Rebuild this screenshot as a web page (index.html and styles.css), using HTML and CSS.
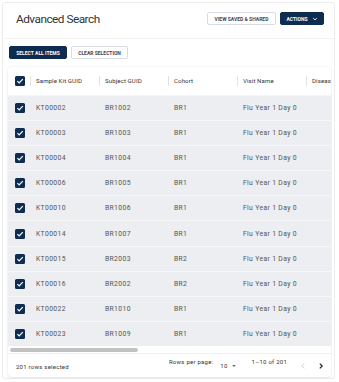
FILE: index.html
```html
<!DOCTYPE html>
<html>
<head>
<meta charset="utf-8">
<link rel="stylesheet" href="styles.css">
</head>
<body>
<div class="page">
  <div class="header">
    <h1 class="title">Advanced Search</h1>
    <div class="header-actions">
      <button class="btn btn-outline">VIEW SAVED &amp; SHARED</button>
      <button class="btn btn-dark">ACTIONS
        <svg class="chev" viewBox="0 0 10 10" width="6" height="6"><path d="M2 3.5 L5 6.5 L8 3.5" fill="none" stroke="#fff" stroke-width="1.6"/></svg>
      </button>
    </div>
  </div>
  <div class="toolbar">
    <button class="btn btn-dark">SELECT ALL ITEMS</button>
    <button class="btn btn-outline">CLEAR SELECTION</button>
  </div>
  <div class="card">
    <div class="table">
      <div class="row head">
        <div class="cell cb"><span class="check"><svg viewBox="0 0 10 10" width="10" height="10"><path d="M2.4 5.2 L4.2 7 L7.8 3.2" fill="none" stroke="#fff" stroke-width="1.2"/></svg></span><i class="sep"></i></div>
        <div class="cell">Sample Kit GUID<i class="sep"></i></div>
        <div class="cell">Subject GUID<i class="sep"></i></div>
        <div class="cell">Cohort<i class="sep"></i></div>
        <div class="cell">Visit Name<i class="sep"></i></div>
        <div class="cell">Disease</div>
      </div>
      <div class="row"><div class="cell cb"><span class="check"><svg viewBox="0 0 10 10" width="10" height="10"><path d="M2.4 5.2 L4.2 7 L7.8 3.2" fill="none" stroke="#fff" stroke-width="1.2"/></svg></span></div><div class="cell">KT00002</div><div class="cell">BR1002</div><div class="cell">BR1</div><div class="cell">Flu Year 1 Day 0</div><div class="cell"></div></div>
      <div class="row"><div class="cell cb"><span class="check"><svg viewBox="0 0 10 10" width="10" height="10"><path d="M2.4 5.2 L4.2 7 L7.8 3.2" fill="none" stroke="#fff" stroke-width="1.2"/></svg></span></div><div class="cell">KT00003</div><div class="cell">BR1003</div><div class="cell">BR1</div><div class="cell">Flu Year 1 Day 0</div><div class="cell"></div></div>
      <div class="row"><div class="cell cb"><span class="check"><svg viewBox="0 0 10 10" width="10" height="10"><path d="M2.4 5.2 L4.2 7 L7.8 3.2" fill="none" stroke="#fff" stroke-width="1.2"/></svg></span></div><div class="cell">KT00004</div><div class="cell">BR1004</div><div class="cell">BR1</div><div class="cell">Flu Year 1 Day 0</div><div class="cell"></div></div>
      <div class="row"><div class="cell cb"><span class="check"><svg viewBox="0 0 10 10" width="10" height="10"><path d="M2.4 5.2 L4.2 7 L7.8 3.2" fill="none" stroke="#fff" stroke-width="1.2"/></svg></span></div><div class="cell">KT00006</div><div class="cell">BR1005</div><div class="cell">BR1</div><div class="cell">Flu Year 1 Day 0</div><div class="cell"></div></div>
      <div class="row"><div class="cell cb"><span class="check"><svg viewBox="0 0 10 10" width="10" height="10"><path d="M2.4 5.2 L4.2 7 L7.8 3.2" fill="none" stroke="#fff" stroke-width="1.2"/></svg></span></div><div class="cell">KT00010</div><div class="cell">BR1006</div><div class="cell">BR1</div><div class="cell">Flu Year 1 Day 0</div><div class="cell"></div></div>
      <div class="row"><div class="cell cb"><span class="check"><svg viewBox="0 0 10 10" width="10" height="10"><path d="M2.4 5.2 L4.2 7 L7.8 3.2" fill="none" stroke="#fff" stroke-width="1.2"/></svg></span></div><div class="cell">KT00014</div><div class="cell">BR1007</div><div class="cell">BR1</div><div class="cell">Flu Year 1 Day 0</div><div class="cell"></div></div>
      <div class="row"><div class="cell cb"><span class="check"><svg viewBox="0 0 10 10" width="10" height="10"><path d="M2.4 5.2 L4.2 7 L7.8 3.2" fill="none" stroke="#fff" stroke-width="1.2"/></svg></span></div><div class="cell">KT00015</div><div class="cell">BR2003</div><div class="cell">BR2</div><div class="cell">Flu Year 1 Day 0</div><div class="cell"></div></div>
      <div class="row"><div class="cell cb"><span class="check"><svg viewBox="0 0 10 10" width="10" height="10"><path d="M2.4 5.2 L4.2 7 L7.8 3.2" fill="none" stroke="#fff" stroke-width="1.2"/></svg></span></div><div class="cell">KT00016</div><div class="cell">BR2002</div><div class="cell">BR2</div><div class="cell">Flu Year 1 Day 0</div><div class="cell"></div></div>
      <div class="row"><div class="cell cb"><span class="check"><svg viewBox="0 0 10 10" width="10" height="10"><path d="M2.4 5.2 L4.2 7 L7.8 3.2" fill="none" stroke="#fff" stroke-width="1.2"/></svg></span></div><div class="cell">KT00022</div><div class="cell">BR1010</div><div class="cell">BR1</div><div class="cell">Flu Year 1 Day 0</div><div class="cell"></div></div>
      <div class="row"><div class="cell cb"><span class="check"><svg viewBox="0 0 10 10" width="10" height="10"><path d="M2.4 5.2 L4.2 7 L7.8 3.2" fill="none" stroke="#fff" stroke-width="1.2"/></svg></span></div><div class="cell">KT00023</div><div class="cell">BR1009</div><div class="cell">BR1</div><div class="cell">Flu Year 1 Day 0</div><div class="cell"></div></div>
    </div>
    <div class="scroll"><div class="thumb"></div></div>
    <div class="footer">
      <span class="selected">201 rows selected</span>
      <div class="pager">
        <span class="rpp">Rows per page:</span>
        <span class="size">10 <svg viewBox="0 0 10 10" width="6" height="6"><path d="M2 3.5 L5 6.5 L8 3.5 Z" fill="#666"/></svg></span>
        <span class="range">1–10 of 201</span>
        <svg class="nav prev" viewBox="0 0 10 10" width="8" height="8"><path d="M6.5 2 L3.5 5 L6.5 8" fill="none" stroke="#c8c8c8" stroke-width="1.1"/></svg>
        <svg class="nav next" viewBox="0 0 10 10" width="8" height="8"><path d="M3.5 2 L6.5 5 L3.5 8" fill="none" stroke="#222" stroke-width="1.5"/></svg>
      </div>
    </div>
  </div>
</div>
</body>
</html>
```

FILE: styles.css
```css
* { box-sizing: border-box; }
html, body { margin: 0; padding: 0; background: #fff; }
body { font-family: Roboto, "Liberation Sans", sans-serif; color: #333; }

.page {
  margin: 2px 4px 3px 2px;
  height: 377px;
  border: 1px solid #ececec;
  border-radius: 3px;
  background: #fff;
}

.header {
  display: flex;
  justify-content: space-between;
  align-items: center;
  height: 36px;
  padding: 0 10px 4px 13px;
  border-bottom: 1px solid #f3f3f3;
}
.title {
  margin: 0;
  font-size: 11.8px;
  font-weight: 400;
  color: #333;
  letter-spacing: -0.5px;
}
.header-actions { display: flex; gap: 4px; }

.btn {
  font-family: Roboto, "Liberation Sans", sans-serif;
  font-size: 5px;
  font-weight: 700;
  height: 13px;
  padding: 0;
  border-radius: 2px;
  display: inline-flex;
  align-items: center;
  justify-content: center;
  gap: 4px;
  cursor: pointer;
  letter-spacing: 0;
  white-space: nowrap;
}
.btn-outline { background: #fff; border: 1px solid #d9dde3; color: #3b4756; }
.btn-dark { background: #0e2b50; border: 1px solid #0e2b50; color: #fff; }
.header-actions .btn-outline { width: 69px; }
.header-actions .btn-dark { width: 44px; }
.toolbar { display: flex; gap: 4px; padding: 7px 6px 0 6px; height: 24px; }
.toolbar .btn-dark { width: 58px; }
.toolbar .btn-outline { width: 57px; }

.card {
  margin: 4px 3px 0 5px;
  border-radius: 4px;
  box-shadow: 0 0 2px rgba(0,0,0,0.12), 0 1px 2px rgba(0,0,0,0.06);
  overflow: hidden;
  background: #fff;
}
.table { display: flex; flex-direction: column; }
.row {
  display: grid;
  grid-template-columns: 23px 69px 69px 69px 69px 69px;
  height: 25.2px;
  background: #eceef1;
  border-top: 1px solid #f7f7f8;
  font-size: 6.8px;
  letter-spacing: 0.35px;
  color: #555;
}
.row.head { height: 27.5px; background: #fff; border-top: 0; color: #333; font-size: 6.1px; letter-spacing: 0.1px; }
.cell {
  position: relative;
  display: flex;
  align-items: center;
  padding-left: 5px;
  white-space: nowrap;
  overflow: hidden;
}
.cell.cb { padding-left: 7px; }
.check {
  width: 10px; height: 10px;
  background: #0f2d52;
  border-radius: 1.5px;
  display: inline-flex;
}
.sep {
  position: absolute;
  right: 0;
  top: 9px;
  width: 1px;
  height: 10px;
  background: #e2e2e2;
}

.scroll { height: 8px; padding: 2px 2px 0 2px; background: #fff; border-bottom: 1px solid #f0f0f0; }
.thumb { width: 128px; height: 4px; border-radius: 2px; background: #c2c2c2; }

.footer {
  height: 23px;
  display: flex;
  justify-content: space-between;
  align-items: center;
  padding: 0 6px 0 8px;
  font-size: 6px;
  letter-spacing: 0.25px;
  color: #333;
}
.selected { margin-top: 1px; }
.pager { display: flex; align-items: center; }
.rpp { margin-top: -9px; margin-right: 7px; }
.size { display: inline-flex; align-items: center; gap: 3px; margin-right: 15px; }
.range { margin-top: -8px; margin-right: 12px; }
.nav.next { margin-left: 10px; }
```
